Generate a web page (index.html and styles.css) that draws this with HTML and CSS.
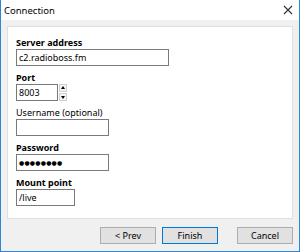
FILE: index.html
```html
<!DOCTYPE html>
<html lang="en">
<head>
    <meta charset="UTF-8">
    <title>Connection</title>
    <link rel="stylesheet" href="styles.css">
</head>
<body>

    <div class="window">

        <!-- Barra de titulo -->
        <div class="titlebar">
            <span class="title">Connection</span>
            <svg class="close" width="10" height="10" viewBox="0 0 10 10">
                <path d="M1 1 L9 9 M9 1 L1 9" stroke="#333" stroke-width="1.1" fill="none"/>
            </svg>
        </div>

        <div class="content">
            <div class="panel">
                <div class="field">
                    <label class="bold">Server address</label>
                    <input class="input wide" type="text" value="c2.radioboss.fm">
                </div>
                <div class="field">
                    <label class="bold">Port</label>
                    <div class="port-row">
                        <input class="input port" type="text" value="8003">
                        <div class="spinner">
                            <span class="spin up"></span>
                            <span class="spin down"></span>
                        </div>
                    </div>
                </div>
                <div class="field">
                    <label>Username (optional)</label>
                    <input class="input mid" type="text" value="">
                </div>
                <div class="field">
                    <label class="bold">Password</label>
                    <div class="input mid dots">&#9679;&#9679;&#9679;&#9679;&#9679;&#9679;&#9679;&#9679;</div>
                </div>
                <div class="field">
                    <label class="bold">Mount point</label>
                    <input class="input short" type="text" value="/live">
                </div>
            </div>

            <div class="buttons">
                <button class="btn">&lt; Prev</button>
                <button class="btn default">Finish</button>
                <button class="btn cancel">Cancel</button>
            </div>
        </div>

    </div>

</body>
</html>
```

FILE: styles.css
```css
/* Estilos globales */
* {
    margin: 0;
    padding: 0;
    box-sizing: border-box;
}

body, html {
    width: 300px;
    height: 252px;
    font-family: 'Noto Sans', sans-serif;
    font-size: 9px;
    color: #000;
    background: #fff;
    overflow: hidden;
}

/* Ventana */
.window {
    width: 300px;
    height: 252px;
    border: 1px solid #2b88d8;
    border-top: none;
    display: flex;
    flex-direction: column;
    background: #f0f0f0;
}

.titlebar {
    height: 20px;
    background: #fff;
    display: flex;
    align-items: center;
    justify-content: space-between;
    padding: 0 5px 0 3px;
}

.title {
    font-size: 9.5px;
}

.close {
    margin-right: 1px;
}

/* Contenido */
.content {
    flex: 1;
    padding: 6px 6px 0 6px;
    display: flex;
    flex-direction: column;
}

.panel {
    height: 193px;
    background: #fff;
    border: 1px solid #dfdfdf;
    padding: 10px 0 0 8px;
    display: flex;
    flex-direction: column;
    gap: 6px;
}

.field {
    display: flex;
    flex-direction: column;
}

.field label {
    line-height: 12px;
    height: 12px;
}

.bold {
    font-weight: bold;
}

.input {
    height: 17px;
    border: 1px solid #7a7a7a;
    font-family: inherit;
    font-size: 9px;
    padding: 0 2px;
    background: #fff;
    outline: none;
    color: #000;
}

.wide {
    width: 153px;
}

.mid {
    width: 93px;
}

.short {
    width: 59px;
}

.dots {
    font-size: 6px;
    line-height: 15px;
    letter-spacing: 0.2px;
    font-family: 'DejaVu Sans', sans-serif;
}

/* Puerto */
.port-row {
    display: flex;
    align-items: flex-start;
}

.port {
    width: 42px;
}

.spinner {
    display: flex;
    flex-direction: column;
    gap: 1px;
    margin-left: 1px;
}

.spin {
    width: 8px;
    height: 8px;
    border: 1px solid #d0d0d0;
    background: #f4f4f4;
    position: relative;
}

.spin::after {
    content: "";
    position: absolute;
    left: 1px;
    border-left: 2px solid transparent;
    border-right: 2px solid transparent;
}

.up::after {
    top: 1px;
    border-bottom: 3px solid #000;
}

.down::after {
    top: 2px;
    border-top: 3px solid #000;
}

/* Botones */
.buttons {
    display: flex;
    justify-content: flex-end;
    gap: 6px;
    margin-top: 8px;
}

.btn {
    width: 56px;
    height: 17px;
    background: #e1e1e1;
    border: 1px solid #adadad;
    font-family: inherit;
    font-size: 9px;
    color: #000;
}

.default {
    border-color: #0078d7;
}

.cancel {
    margin-left: 13px;
}
```
